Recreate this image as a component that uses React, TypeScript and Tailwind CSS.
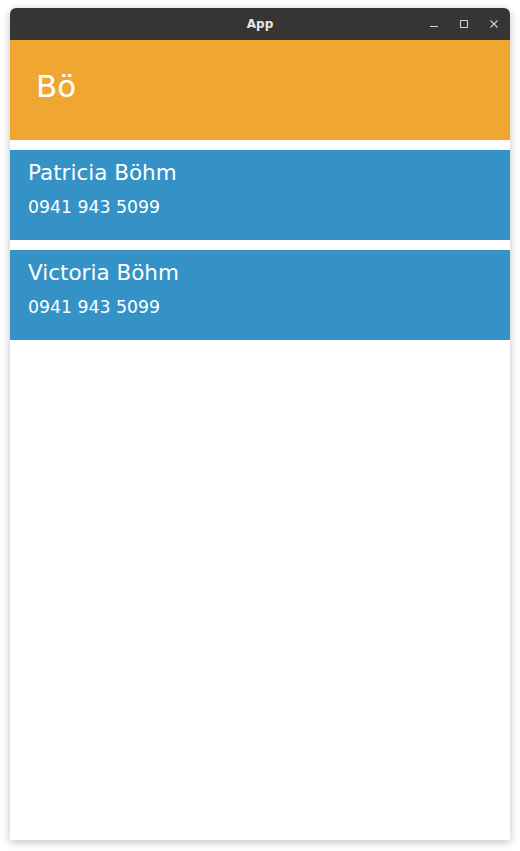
import React from "react";

const contacts = [
  { name: "Patricia Böhm", phone: "0941 943 5099" },
  { name: "Victoria Böhm", phone: "0941 943 5099" },
];

export default function App() {
  return (
    <div className="min-h-[851px] bg-white pt-2 px-[10px] font-['DejaVu_Sans',sans-serif]">
      <div className="h-[832px] flex flex-col rounded-t-md bg-white shadow-[0_2px_8px_rgba(0,0,0,0.25)] overflow-hidden">
        {/* title bar */}
        <div className="h-8 shrink-0 bg-[#353535] relative flex items-center justify-center">
          <span className="text-[12px] font-bold text-[#e8e8e8]">App</span>
          <div className="absolute right-0 top-0 h-8 flex items-center gap-[22px] pr-[12px] text-[#d0d0d0]">
            <svg width="8" height="8" viewBox="0 0 8 8">
              <path d="M0 6.5h8" stroke="currentColor" strokeWidth="1" />
            </svg>
            <svg width="8" height="8" viewBox="0 0 8 8">
              <rect x="0.5" y="0.5" width="7" height="7" fill="none" stroke="currentColor" strokeWidth="1" />
            </svg>
            <svg width="8" height="8" viewBox="0 0 8 8">
              <path d="M0.5 0.5l7 7M7.5 0.5l-7 7" stroke="currentColor" strokeWidth="1.1" />
            </svg>
          </div>
        </div>

        {/* header */}
        <div className="h-[100px] shrink-0 bg-[#f0a732] flex items-center pl-[26px] pb-[7px]">
          <span className="text-[31px] text-white leading-none">Bö</span>
        </div>

        {/* list */}
        <div className="flex flex-col gap-[10px] pt-[10px]">
          {contacts.map((c) => (
            <div key={c.name} className="h-[90px] bg-[#3592c6] px-[18px] pt-[10px] text-white">
              <div className="text-[21.5px] leading-[25px]">{c.name}</div>
              <div className="text-[17.3px] leading-[20px] mt-[12px]">{c.phone}</div>
            </div>
          ))}
        </div>
      </div>
    </div>
  );
}
